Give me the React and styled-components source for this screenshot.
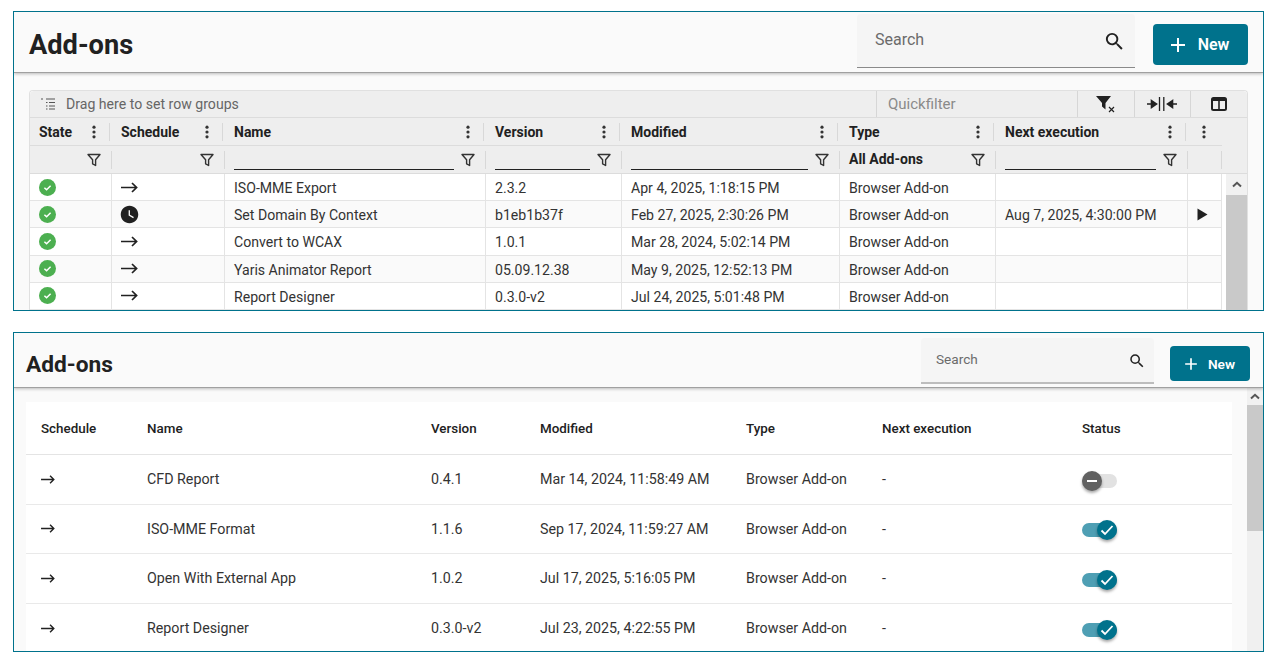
import React from "react";
import styled, { createGlobalStyle } from "styled-components";
import { MdWatchLater, MdSearch, MdAdd } from "react-icons/md";

const teal = "#00728c";

const GlobalStyle = createGlobalStyle`
  html, body {
    margin: 0;
    padding: 0;
    background: #ffffff;
    font-family: Roboto, "Liberation Sans", sans-serif;
    color: #212121;
    overflow: hidden;
  }
`;

const Page = styled.div`
  display: flex;
  flex-direction: column;
  gap: 21px;
  width: 1251px;
  padding: 11px 0 0 13px;
`;

const Frame = styled.section`
  display: flex;
  flex-direction: column;
  box-sizing: border-box;
  height: ${(p) => p.$height}px;
  border: 1px solid ${teal};
  background: #fafafa;
  overflow: hidden;
`;

// title bar shared by both panels
const Bar = styled.header`
  flex: none;
  display: flex;
  align-items: flex-start;
  box-sizing: border-box;
  height: ${(p) => p.$height}px;
  padding: ${(p) => p.$top}px ${(p) => p.$right}px 0 ${(p) => p.$left}px;
  border-bottom: 1px solid #a0a0a0;
  box-shadow: 0 1px 3px rgba(0, 0, 0, 0.25);
  position: relative;
  z-index: 1;
`;

const Title = styled.h1`
  flex: 1;
  margin: ${(p) => p.$top}px 0 0;
  font-size: ${(p) => p.$size}px;
  line-height: 32px;
  font-weight: 700;
  color: #212121;
`;

const SearchBox = styled.div`
  display: flex;
  align-items: flex-start;
  justify-content: space-between;
  box-sizing: border-box;
  width: ${(p) => p.$width}px;
  height: ${(p) => p.$height}px;
  margin-right: ${(p) => p.$gap}px;
  padding: ${(p) => p.$padTop}px ${(p) => p.$padRight}px 0 ${(p) => p.$padLeft}px;
  background: #f5f5f5;
  border-bottom: ${(p) => (p.$thick ? "2px solid #bdbdbd" : "1px solid #8a8a8a")};
  border-radius: 4px 4px 0 0;
  color: #6b6b6b;
  font-size: ${(p) => p.$size}px;
  line-height: 20px;
  svg {
    color: #212121;
    font-size: ${(p) => p.$icon}px;
    margin-top: ${(p) => p.$iconTop}px;
  }
`;

const NewButton = styled.button`
  display: flex;
  align-items: center;
  justify-content: center;
  box-sizing: border-box;
  gap: ${(p) => p.$gapIcon}px;
  width: ${(p) => p.$width}px;
  height: ${(p) => p.$height}px;
  margin-top: ${(p) => p.$top}px;
  padding: 0 ${(p) => p.$padRight}px 0 0;
  border: 0;
  border-radius: 4px;
  background: ${teal};
  color: #ffffff;
  font-family: inherit;
  font-size: ${(p) => p.$size}px;
  font-weight: 600;
  svg {
    font-size: ${(p) => p.$icon}px;
  }
`;

const GridArea = styled.div`
  flex: 1;
  min-height: 0;
  padding: 17px 15px 0;
`;

const Grid = styled.div`
  border: 1px solid #e0e0e0;
  border-bottom: 0;
  border-radius: 4px 4px 0 0;
  background: #ffffff;
  font-size: 14.1px;
`;

const Toolbar = styled.div`
  display: flex;
  align-items: center;
  height: 26px;
  background: #eeeeee;
  border-bottom: 1px solid #dcdcdc;
  border-radius: 4px 4px 0 0;
`;

const DragZone = styled.div`
  flex: 1;
  display: flex;
  align-items: center;
  gap: 10px;
  padding-left: 10px;
  color: #666666;
`;

const Quickfilter = styled.div`
  box-sizing: border-box;
  align-self: stretch;
  display: flex;
  align-items: center;
  width: 201px;
  padding-left: 11px;
  border-left: 1px solid #d6d6d6;
  color: #8a8a8a;
  font-size: 15px;
`;

const ToolButton = styled.div`
  box-sizing: border-box;
  align-self: stretch;
  display: flex;
  align-items: center;
  justify-content: center;
  width: ${(p) => p.$width}px;
  padding-right: ${(p) => p.$padRight ?? 0}px;
  border-left: 1px solid #d6d6d6;
`;

const gridColumns = [82, 113, 261, 136, 218, 156, 192, 34];

const HeadRow = styled.div`
  display: flex;
  background: #eeeeee;
  height: 28px;
`;

const HeadCells = styled.div`
  display: flex;
  width: 1192px;
  border-bottom: 1px solid #dcdcdc;
  box-sizing: border-box;
`;

const HeadCell = styled.div`
  box-sizing: border-box;
  display: flex;
  align-items: center;
  justify-content: space-between;
  flex: none;
  width: ${(p) => p.$width}px;
  padding-left: ${(p) => p.$pad}px;
  padding-right: 2px;
  font-size: 14px;
  font-weight: 700;
  color: #212121;
`;

const CellEnd = styled.span`
  display: flex;
  align-items: center;
  gap: ${(p) => p.$gap}px;
  height: 100%;
`;

const Divider = styled.span`
  display: block;
  flex: none;
  width: 1px;
  height: 18px;
  background: #d8d8d8;
`;

const FilterRow = styled.div`
  display: flex;
  background: #eeeeee;
  height: 28px;
  border-bottom: 1px solid #dcdcdc;
  box-sizing: border-box;
`;

const FilterCell = styled.div`
  box-sizing: border-box;
  flex: none;
  display: flex;
  align-items: center;
  justify-content: flex-end;
  width: ${(p) => p.$width}px;
  padding-left: 9px;
  font-size: 14px;
  font-weight: 700;
  gap: 10px;
`;

const FilterInput = styled.div`
  flex: 1;
  align-self: flex-end;
  height: 22px;
  line-height: 23px;
  margin-bottom: 3px;
  margin-right: -3px;
  box-sizing: border-box;
  border-bottom: ${(p) => (p.$plain ? "0" : "1px solid #212121")};
`;

const BodyWrap = styled.div`
  display: flex;
  height: 137px;
  overflow: hidden;
`;

const Rows = styled.div`
  flex: none;
  width: 1192px;
`;

const GridRow = styled.div`
  display: flex;
  box-sizing: border-box;
  height: 27.2px;
  background: ${(p) => (p.$odd ? "#fafafa" : "#ffffff")};
  border-bottom: 1px solid #e4e4e4;
`;

const GridCell = styled.div`
  box-sizing: border-box;
  flex: none;
  display: flex;
  align-items: center;
  width: ${(p) => p.$width}px;
  padding-left: 9px;
  border-right: 1px solid #e4e4e4;
  color: #333333;
  white-space: nowrap;
`;

const TextCell = styled(GridCell)`
  padding-top: 2px;
`;

const Scrollbar = styled.div`
  flex: none;
  display: flex;
  flex-direction: column;
  width: ${(p) => p.$width}px;
  margin-left: ${(p) => p.$gap}px;
  background: #f0f0f0;
`;

const ScrollUp = styled.div`
  flex: none;
  display: flex;
  align-items: center;
  justify-content: center;
  height: ${(p) => p.$height}px;
  background: #f1f1f1;
`;

const ScrollThumb = styled.div`
  flex: ${(p) => (p.$height ? "none" : "1")};
  height: ${(p) => (p.$height ? `${p.$height}px` : "auto")};
  background: #c9c9c9;
`;

const CardArea = styled.div`
  flex: 1;
  min-height: 0;
  display: flex;
`;

const CardWrap = styled.div`
  flex: 1;
  padding: 14px 15px 0 12px;
  overflow: hidden;
`;

const Card = styled.div`
  background: #ffffff;
  font-size: 14.25px;
`;

const cardColumns = [106, 284, 109, 206, 136, 200, 165];

const CardHead = styled.div`
  display: flex;
  align-items: center;
  height: 53px;
  border-bottom: 1px solid #e4e4e4;
  box-sizing: border-box;
  font-size: 13.4px;
  font-weight: 500;
  color: #212121;
`;

const CardRow = styled.div`
  display: flex;
  align-items: center;
  box-sizing: border-box;
  height: 49.6px;
  border-bottom: 1px solid #e9e9e9;
  color: #333333;
`;

const CardCell = styled.div`
  box-sizing: border-box;
  flex: none;
  display: flex;
  align-items: center;
  width: ${(p) => p.$width}px;
  padding-left: 15px;
  white-space: nowrap;
  svg {
    flex: none;
  }
`;

const Toggle = styled.div`
  position: relative;
  width: 35px;
  height: 14px;
  margin-top: 3px;
  border-radius: 7px;
  background: ${(p) => (p.$on ? "#4f9fb4" : "#e2e2e2")};
`;

const Knob = styled.div`
  position: absolute;
  top: -3px;
  ${(p) => (p.$on ? "right: 0;" : "left: 0;")}
  display: flex;
  align-items: center;
  justify-content: center;
  width: 20px;
  height: 20px;
  border-radius: 50%;
  background: ${(p) => (p.$on ? teal : "#616161")};
  box-shadow: 0 2px 3px rgba(0, 0, 0, 0.35);
`;

const ClockIcon = styled(MdWatchLater)`
  margin-left: -2px;
`;

const DotsIcon = () => (
  <svg width="4" height="14" viewBox="0 0 4 14">
    <circle cx="2" cy="2.2" r="1.6" fill="#333" />
    <circle cx="2" cy="7" r="1.6" fill="#333" />
    <circle cx="2" cy="11.8" r="1.6" fill="#333" />
  </svg>
);

const FunnelIcon = () => (
  <svg width="14" height="14" viewBox="0 0 14 14" style={{ flex: "none" }}>
    <path d="M1 1.5h12L8.6 6.8v5.7L5.6 10.8V6.8z" fill="none" stroke="#333" strokeWidth="1.4" strokeLinejoin="round" />
  </svg>
);

const GroupIcon = () => (
  <svg width="16" height="12" viewBox="0 0 16 12">
    <path d="M1 1h2M6 1h9M6 4.5h1.5M9 4.5h6M6 8h1.5M9 8h6M6 11h1.5M9 11h6" stroke="#555" strokeWidth="1.2" />
  </svg>
);

const ClearFilterIcon = () => (
  <svg width="20" height="18" viewBox="0 0 20 18">
    <path d="M0 1h15L9.5 8v6.5L6 11.5V8z" fill="#212121" />
    <path d="M13 12l5 5M18 12l-5 5" stroke="#212121" strokeWidth="1.2" />
  </svg>
);

const CollapseIcon = () => (
  <svg width="30" height="14" viewBox="0 0 30 14">
    <path d="M0 7h7M4.5 3.6L9.5 7L4.5 10.4zM30 7h-7M25.5 3.6L20.5 7L25.5 10.4z" fill="#212121" stroke="#212121" strokeWidth="1.6" />
    <path d="M12.5 0v14M16.8 0v14" stroke="#212121" strokeWidth="1.3" />
  </svg>
);

const ColumnsIcon = () => (
  <svg width="16" height="14" viewBox="0 0 16 14">
    <rect x="1" y="1" width="14" height="12" rx="1.5" fill="none" stroke="#212121" strokeWidth="2" />
    <rect x="1" y="1" width="14" height="3" fill="#212121" />
    <path d="M8 2v11" stroke="#212121" strokeWidth="1.6" />
  </svg>
);

const OkIcon = () => (
  <svg width="17" height="17" viewBox="0 0 17 17">
    <circle cx="8.5" cy="8.5" r="8.5" fill="#4caf50" />
    <path d="M5.4 8.7l2.2 2.1 4-4" fill="none" stroke="#fff" strokeWidth="1.5" />
  </svg>
);

const PlayIcon = () => (
  <svg width="11" height="13" viewBox="0 0 11 13">
    <path d="M0.5 0.5L10.5 6.5L0.5 12.5z" fill="#212121" />
  </svg>
);

const ArrowIcon = ({ width, height }) => (
  <svg width={width} height={height} viewBox="0 0 17 11">
    <path d="M0 5.5H15.5M11 1l4.6 4.5L11 10" fill="none" stroke="#212121" strokeWidth="1.7" />
  </svg>
);

const ChevronUp = () => (
  <svg width="10" height="7" viewBox="0 0 10 7">
    <path d="M1 5.5L5 1.8l4 3.7" fill="none" stroke="#555" strokeWidth="2" />
  </svg>
);

const gridHead = ["State", "Schedule", "Name", "Version", "Modified", "Type", "Next execution", ""];

const gridRows = [
  { name: "ISO-MME Export", version: "2.3.2", modified: "Apr 4, 2025, 1:18:15 PM", next: "" },
  { name: "Set Domain By Context", version: "b1eb1b37f", modified: "Feb 27, 2025, 2:30:26 PM", next: "Aug 7, 2025, 4:30:00 PM", timed: true },
  { name: "Convert to WCAX", version: "1.0.1", modified: "Mar 28, 2024, 5:02:14 PM", next: "" },
  { name: "Yaris Animator Report", version: "05.09.12.38", modified: "May 9, 2025, 12:52:13 PM", next: "" },
  { name: "Report Designer", version: "0.3.0-v2", modified: "Jul 24, 2025, 5:01:48 PM", next: "" },
];

const cardHead = ["Schedule", "Name", "Version", "Modified", "Type", "Next execution", "Status"];

const cardRows = [
  { name: "CFD Report", version: "0.4.1", modified: "Mar 14, 2024, 11:58:49 AM", on: false },
  { name: "ISO-MME Format", version: "1.1.6", modified: "Sep 17, 2024, 11:59:27 AM", on: true },
  { name: "Open With External App", version: "1.0.2", modified: "Jul 17, 2025, 5:16:05 PM", on: true },
  { name: "Report Designer", version: "0.3.0-v2", modified: "Jul 23, 2025, 4:22:55 PM", on: true },
];

const StatusToggle = ({ on }) => (
  <Toggle $on={on}>
    <Knob $on={on}>
      {on ? (
        <svg width="14" height="12" viewBox="0 0 14 12">
          <path d="M1.5 6.5l3.5 3.5 7.5-8" fill="none" stroke="#fff" strokeWidth="1.8" />
        </svg>
      ) : (
        <svg width="12" height="4" viewBox="0 0 12 4">
          <path d="M1 2h10" stroke="#fff" strokeWidth="2" />
        </svg>
      )}
    </Knob>
  </Toggle>
);

const GridPanel = () => (
  <Frame $height={300}>
    <Bar $height={61} $top={2} $left={15} $right={15}>
      <Title $size={27.2} $top={15}>Add-ons</Title>
      <SearchBox $width={278} $height={54} $gap={18} $padTop={16} $padLeft={18} $padRight={9} $size={16} $icon={23} $iconTop={0}>
        <span>Search</span>
        <MdSearch />
      </SearchBox>
      <NewButton $width={95} $height={41} $top={10} $gapIcon={8} $padRight={6} $size={16} $icon={24}>
        <MdAdd />
        New
      </NewButton>
    </Bar>
    <GridArea>
      <Grid>
        <Toolbar>
          <DragZone>
            <GroupIcon />
            Drag here to set row groups
          </DragZone>
          <Quickfilter>Quickfilter</Quickfilter>
          <ToolButton $width={57}><ClearFilterIcon /></ToolButton>
          <ToolButton $width={56} $padRight={2}><CollapseIcon /></ToolButton>
          <ToolButton $width={57}><ColumnsIcon /></ToolButton>
        </Toolbar>
        <HeadRow>
          <HeadCells>
            {gridHead.map((label, i) => (
              <HeadCell key={i} $width={gridColumns[i]} $pad={i === 7 ? 14 : 9}>
                {label}
                <CellEnd $gap={label ? 13 : 0}>
                  <DotsIcon />
                  {label && <Divider />}
                </CellEnd>
              </HeadCell>
            ))}
          </HeadCells>
        </HeadRow>
        <FilterRow>
          {gridColumns.map((width, i) => (
            <FilterCell key={i} $width={width}>
              {i >= 2 && i < 7 && (
                <FilterInput $plain={i === 5}>{i === 5 && "All Add-ons"}</FilterInput>
              )}
              {i < 7 && <FunnelIcon />}
              <Divider />
            </FilterCell>
          ))}
        </FilterRow>
        <BodyWrap>
          <Rows>
            {gridRows.map((row, i) => (
              <GridRow key={row.name} $odd={i % 2 === 1}>
                <GridCell $width={gridColumns[0]}><OkIcon /></GridCell>
                <GridCell $width={gridColumns[1]}>
                  {row.timed ? <ClockIcon size={21} color="#212121" /> : <ArrowIcon width={17} height={11} />}
                </GridCell>
                <TextCell $width={gridColumns[2]}>{row.name}</TextCell>
                <TextCell $width={gridColumns[3]}>{row.version}</TextCell>
                <TextCell $width={gridColumns[4]}>{row.modified}</TextCell>
                <TextCell $width={gridColumns[5]}>Browser Add-on</TextCell>
                <TextCell $width={gridColumns[6]}>{row.next}</TextCell>
                <GridCell $width={gridColumns[7]}>{row.timed && <PlayIcon />}</GridCell>
              </GridRow>
            ))}
          </Rows>
          <Scrollbar $width={21} $gap={4}>
            <ScrollUp $height={21}><ChevronUp /></ScrollUp>
            <ScrollThumb />
          </Scrollbar>
        </BodyWrap>
      </Grid>
    </GridArea>
  </Frame>
);

const CardPanel = () => (
  <Frame $height={320}>
    <Bar $height={55} $top={5} $left={12} $right={13}>
      <Title $size={22.7} $top={11}>Add-ons</Title>
      <SearchBox $width={233} $height={46} $gap={16} $padTop={11} $padLeft={15} $padRight={8} $size={13.6} $icon={18} $iconTop={3} $thick>
        <span>Search</span>
        <MdSearch />
      </SearchBox>
      <NewButton $width={80} $height={35} $top={8} $gapIcon={7} $padRight={4} $size={13.7} $icon={20}>
        <MdAdd />
        New
      </NewButton>
    </Bar>
    <CardArea>
      <CardWrap>
        <Card>
          <CardHead>
            {cardHead.map((label, i) => (
              <CardCell key={label} $width={cardColumns[i]}>{label}</CardCell>
            ))}
          </CardHead>
          {cardRows.map((row) => (
            <CardRow key={row.name}>
              <CardCell $width={cardColumns[0]}><ArrowIcon width={14} height={9} /></CardCell>
              <CardCell $width={cardColumns[1]}>{row.name}</CardCell>
              <CardCell $width={cardColumns[2]}>{row.version}</CardCell>
              <CardCell $width={cardColumns[3]}>{row.modified}</CardCell>
              <CardCell $width={cardColumns[4]}>Browser Add-on</CardCell>
              <CardCell $width={cardColumns[5]}>-</CardCell>
              <CardCell $width={cardColumns[6]}><StatusToggle on={row.on} /></CardCell>
            </CardRow>
          ))}
        </Card>
      </CardWrap>
      <Scrollbar $width={16} $gap={0}>
        <ScrollUp $height={17}><ChevronUp /></ScrollUp>
        <ScrollThumb $height={126} />
      </Scrollbar>
    </CardArea>
  </Frame>
);

export default function App() {
  return (
    <>
      <GlobalStyle />
      <Page>
        <GridPanel />
        <CardPanel />
      </Page>
    </>
  );
}
